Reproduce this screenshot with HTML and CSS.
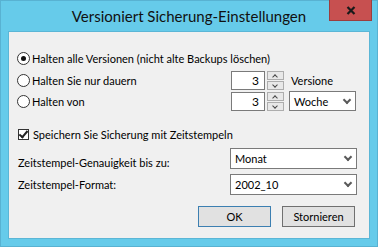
FILE: index.html
```html
<!DOCTYPE html>
<html lang="de">
<head>
    <meta charset="UTF-8">
    <title>Versioniert Sicherung-Einstellungen</title>
    <link rel="stylesheet" href="styles.css">
</head>
<body>

    <div class="window">
        <!-- Title bar -->
        <div class="titlebar">
            <span></span>
            <h1 class="title">Versioniert Sicherung-Einstellungen</h1>
            <button class="close" type="button">
                <svg width="10" height="9" viewBox="0 0 10 9"><path d="M1.5 1 L8.5 8 M8.5 1 L1.5 8" stroke="#1a1a1a" stroke-width="2.2"/></svg>
            </button>
        </div>

        <div class="client">
            <!-- Versions -->
            <div class="row row-first">
                <label class="choice"><input type="radio" name="keep" checked>Halten alle Versionen (nicht alte Backups löschen)</label>
            </div>
            <div class="row row-second">
                <label class="choice"><input type="radio" name="keep">Halten Sie nur dauern</label>
                <div class="controls">
                    <div class="spinner">
                        <span class="num">3</span>
                        <div class="spin"><span class="arrow up"></span><span class="arrow down"></span></div>
                    </div>
                    <span class="unit">Versione</span>
                </div>
            </div>
            <div class="row row-third">
                <label class="choice"><input type="radio" name="keep">Halten von</label>
                <div class="controls">
                    <div class="spinner">
                        <span class="num">3</span>
                        <div class="spin"><span class="arrow up"></span><span class="arrow down"></span></div>
                    </div>
                    <div class="combo combo-small"><span>Woche</span><span class="chev"></span></div>
                </div>
            </div>

            <!-- Timestamp -->
            <div class="row row-check">
                <label class="choice"><input type="checkbox" checked>Speichern Sie Sicherung mit Zeitstempeln</label>
            </div>
            <div class="row row-precision">
                <span class="label label-low">Zeitstempel-Genauigkeit bis zu:</span>
                <div class="combo combo-wide"><span>Monat</span><span class="chev"></span></div>
            </div>
            <div class="row row-format">
                <span class="label">Zeitstempel-Format:</span>
                <div class="combo combo-wide"><span>2002_10</span><span class="chev"></span></div>
            </div>

            <!-- Buttons -->
            <div class="buttons">
                <button class="btn btn-default" type="button">OK</button>
                <button class="btn" type="button">Stornieren</button>
            </div>
        </div>
    </div>

</body>
</html>
```

FILE: styles.css
```css
html, body {
    margin: 0;
    padding: 0;
}
body {
    font-family: Lato, "Noto Sans", sans-serif;
    font-size: 11px;
    color: #000;
}
.window {
    width: 378px;
    height: 247px;
    box-sizing: border-box;
    background: #66cbea;
    border: 1px solid #58b2d2;
    padding: 0 7px 7px;
    display: flex;
    flex-direction: column;
}
.titlebar {
    height: 30px;
    display: grid;
    grid-template-columns: 1fr auto 1fr;
    align-items: center;
}
.title {
    margin: 0;
    font-size: 15px;
    font-weight: normal;
    color: #111;
    padding-bottom: 1px;
}
.close {
    justify-self: end;
    align-self: start;
    margin: -1px -2px 0 0;
    width: 43px;
    height: 21px;
    background: #c75050;
    border: 1px solid #9c3e3e;
    border-top: none;
    padding: 0;
    display: flex;
    align-items: center;
    justify-content: center;
}
.client {
    flex: 1;
    background: #f0f0f0;
    border: 1px solid #5bb6d6;
    padding: 16px 12px 0 8px;
    display: flex;
    flex-direction: column;
}
.row {
    display: flex;
    align-items: center;
    justify-content: space-between;
    height: 20px;
}
.row-second { margin-top: 2px; }
.row-third { margin-top: 1px; }
.row-check { margin-top: 13px; }
.row-precision { margin-top: 4px; height: 21px; }
.row-format { margin-top: 5px; height: 21px; }
.choice {
    display: flex;
    align-items: center;
    white-space: nowrap;
}
.choice input {
    appearance: none;
    -webkit-appearance: none;
    margin: 0 2px 0 0;
    width: 13px;
    height: 13px;
    background: #fff;
    border: 1px solid #333;
    box-sizing: border-box;
    flex: none;
}
.choice input[type="radio"] {
    border-radius: 50%;
    display: flex;
    align-items: center;
    justify-content: center;
}
.choice input[type="radio"]:checked::after {
    content: "";
    width: 5px;
    height: 5px;
    border-radius: 50%;
    background: #111;
}
.choice input[type="checkbox"] {
    width: 11px;
    height: 11px;
    margin-left: 1px;
    margin-right: 4px;
    position: relative;
}
/* checkmark */
.choice input[type="checkbox"]:checked::after {
    content: "";
    position: absolute;
    left: 2px;
    top: -1px;
    width: 3px;
    height: 7px;
    border: solid #222;
    border-width: 0 2px 2px 0;
    transform: rotate(40deg);
}
.controls {
    display: flex;
    align-items: center;
    width: 125px;
    margin-right: 1px;
}
.spinner {
    display: flex;
    align-items: center;
    gap: 2px;
}
.num {
    width: 34px;
    height: 19px;
    box-sizing: border-box;
    background: #fff;
    border: 1px solid #7a7a7a;
    text-align: right;
    padding-right: 5px;
    line-height: 17px;
    font-size: 12px;
}
.spin {
    width: 17px;
    height: 19px;
    display: flex;
    flex-direction: column;
    gap: 1px;
}
.arrow {
    flex: 1;
    box-sizing: border-box;
    border: 1px solid #adadad;
    background: #e8e8e8;
    position: relative;
}
.arrow::after {
    content: "";
    position: absolute;
    left: 5px;
    width: 3px;
    height: 3px;
    border: solid #444;
    border-width: 1px 0 0 1px;
}
.arrow.up::after {
    top: 3px;
    transform: rotate(45deg);
}
.arrow.down::after {
    top: 1px;
    transform: rotate(225deg);
}
.unit {
    margin-left: 7px;
}
.combo {
    height: 20px;
    box-sizing: border-box;
    background: #fff;
    border: 1px solid #7a7a7a;
    display: flex;
    align-items: center;
    justify-content: space-between;
    padding: 0 5px 0 4px;
}
.combo-small {
    width: 67px;
    margin-left: 5px;
}
.combo-wide {
    width: 127px;
    height: 21px;
}
.chev {
    width: 4px;
    height: 4px;
    border: solid #5a5a5a;
    border-width: 0 2px 2px 0;
    transform: rotate(45deg);
    margin-top: -3px;
}
.label {
    padding-left: 1px;
}
.label-low {
    padding-top: 7px;
}
.buttons {
    display: flex;
    justify-content: flex-end;
    gap: 11px;
    margin-top: 11px;
    padding-right: 2px;
}
.btn {
    width: 73px;
    height: 21px;
    font-family: inherit;
    font-size: 11px;
    background: #e1e1e1;
    border: 1px solid #707070;
    padding: 0;
    color: #000;
}
.btn-default {
    border-color: #3c7fb1;
}
```
